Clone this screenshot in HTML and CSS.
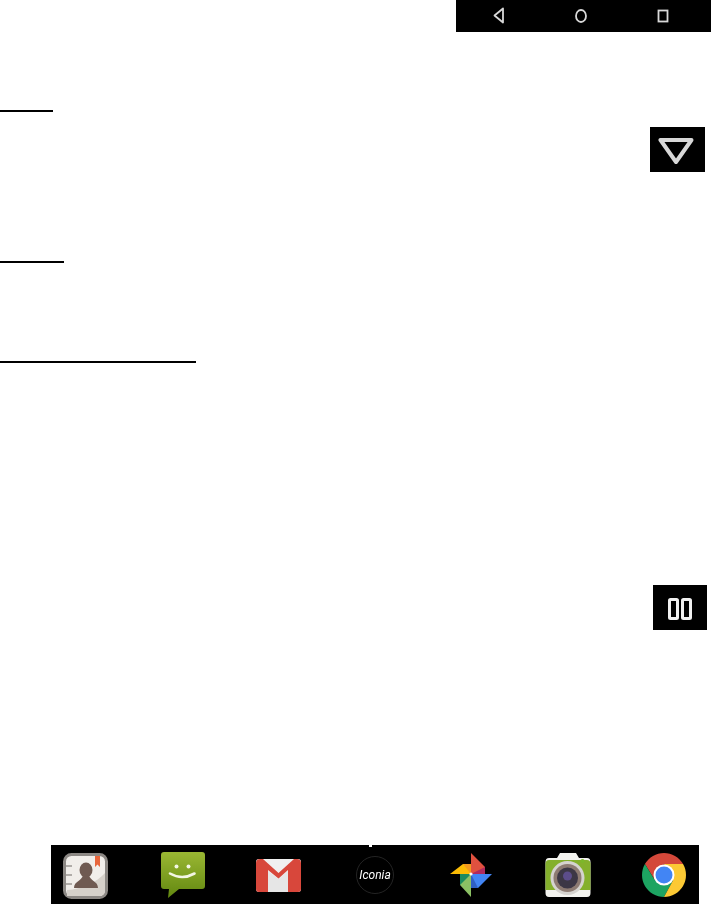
FILE: index.html
```html
<!DOCTYPE html>
<html lang="en">

<head>
    <meta charset="UTF-8">
    <title>Tablet manual page</title>
    <link rel="stylesheet" href="styles.css">
</head>

<body>
    <div class="page">
        <!-- Navigation bar -->
        <div class="navBar">
            <svg class="softIcon" width="255" height="32" viewBox="0 0 255 32">
                <path d="M47 8.5 L38.5 15.5 L47 22.5 Z" fill="none" stroke="#d8d8d8" stroke-width="1.8" stroke-linejoin="round"/>
                <ellipse cx="125" cy="16" rx="5" ry="6" fill="none" stroke="#d8d8d8" stroke-width="1.8"/>
                <rect x="202.5" y="10.5" width="9" height="11" fill="none" stroke="#d8d8d8" stroke-width="1.8"/>
            </svg>
        </div>

        <div class="rule ruleOne"></div>

        <div class="keyBox triangleBox">
            <svg class="softIcon" width="55" height="45" viewBox="0 0 55 45">
                <path d="M10.5 13 L41.5 13 L26 35 Z" fill="none" stroke="#d8d8d8" stroke-width="4" stroke-linejoin="round"/>
            </svg>
        </div>

        <div class="rule ruleTwo"></div>
        <div class="rule ruleThree"></div>

        <div class="keyBox pauseBox">
            <svg class="softIcon" width="54" height="45" viewBox="0 0 54 45">
                <rect x="16.5" y="14.5" width="8" height="19" rx="1" fill="none" stroke="#f0f0f0" stroke-width="3"/>
                <rect x="29.5" y="14.5" width="8" height="19" rx="1" fill="none" stroke="#f0f0f0" stroke-width="3"/>
            </svg>
        </div>

        <!-- App dock -->
        <div class="dock">
            <span class="dockNotch"></span>

            <svg class="appIcon" viewBox="0 0 46 46">
                <rect x="2.5" y="1.5" width="42" height="43" rx="7" fill="#f1eeea" stroke="#8c8884" stroke-width="3"/>
                <path d="M5 43 V37 C20 36 34 30 43 20 V37 Q43 43 37 43 Z" fill="#d6d1ca"/>
                <ellipse cx="24" cy="17" rx="6.5" ry="7.5" fill="#6f5a51"/>
                <path d="M12 35 C12 28 20 28 21 22 H27 C28 28 36 28 36 35 Z" fill="#6f5a51"/>
                <path d="M33 3 H38 V14 L35.5 11.5 L33 14 Z" fill="#e8663c"/>
                <path d="M4 13 H10 M4 22 H10 M4 31 H10" stroke="#9a9792" stroke-width="1.3"/>
            </svg>

            <svg class="appIcon" viewBox="0 0 46 46">
                <defs>
                    <linearGradient id="msgGreen" x1="0" y1="0" x2="0" y2="1">
                        <stop offset="0" stop-color="#9ab733"/>
                        <stop offset="1" stop-color="#628810"/>
                    </linearGradient>
                </defs>
                <path d="M5 -1 H43 Q46 -1 46 2 V33 Q46 36 43 36 H20 L9 45 L10 36 H5 Q2 36 2 33 V2 Q2 -1 5 -1 Z" fill="url(#msgGreen)"/>
                <circle cx="17.5" cy="13.5" r="2" fill="#f3f6e4"/>
                <circle cx="29.5" cy="13.5" r="2" fill="#f3f6e4"/>
                <path d="M11 20.5 Q23 27.5 35.5 20.5" fill="none" stroke="#f3f6e4" stroke-width="2.6" stroke-linecap="round"/>
            </svg>

            <svg class="appIcon" viewBox="0 0 46 46">
                <rect x="1" y="6" width="45" height="33" rx="3" fill="#f0f0f0"/>
                <path d="M13 39 V18 L23.5 26 L33 18 V39 Z" fill="#e6e6e6"/>
                <path d="M1 10 Q1 6 5 6 H8 L23.5 20 L39 6 H42 Q46 6 46 10 V36 Q46 39 43 39 H33 V17 L23.5 25.5 L13 17 V39 H4 Q1 39 1 36 Z" fill="#d8473b"/>
            </svg>

            <svg class="appIcon" viewBox="0 0 46 46">
                <circle cx="23" cy="22" r="18.5" fill="#000" stroke="#242424" stroke-width="1"/>
                <text class="iconiaText" x="23" y="26" text-anchor="middle">Iconia</text>
            </svg>

            <svg class="appIcon" viewBox="0 0 46 46">
                <path d="M23 21 V0 L37 14 V21 Z" fill="#e0513f"/>
                <path d="M23 21 L37 14 V21 Z" fill="#b02a5e"/>
                <path d="M23 21 H44 L30 35 H23 Z" fill="#4285f4"/>
                <path d="M23 21 L30 35 H23 Z" fill="#2f5fc4"/>
                <path d="M23 21 V44 L12 32 V21 Z" fill="#8bc064"/>
                <path d="M23 21 L12 32 V21 Z" fill="#1b8a5f"/>
                <path d="M23 21 H2 L15 11 H23 Z" fill="#fbbc05"/>
                <path d="M23 21 L15 11 H23 Z" fill="#f29a1f"/>
                <circle cx="23" cy="21" r="1.6" fill="#fff"/>
            </svg>

            <svg class="appIcon" viewBox="0 0 46 46">
                <path d="M4 5 H12 L15 0 H31 L34 5 H42 Q45.5 5 45.5 9 V40 Q45.5 44 42 44 H4 Q0.5 44 0.5 40 V9 Q0.5 5 4 5 Z" fill="#f3f3ef"/>
                <path d="M0.5 11 Q0.5 7 4 7 H42 Q45.5 7 45.5 11 V37 H0.5 Z" fill="#84b02c"/>
                <circle cx="22.5" cy="25" r="17" fill="#d5d3cf"/>
                <circle cx="22.5" cy="25" r="14" fill="#8d7b72"/>
                <circle cx="22.5" cy="25" r="10.5" fill="#3c3745"/>
                <circle cx="22.5" cy="23" r="4.5" fill="#5c4d8a"/>
                <circle cx="37.5" cy="8" r="2" fill="#7cb82a"/>
            </svg>

            <svg class="appIcon" viewBox="0 0 46 46">
                <path d="M3.95 11 A22 22 0 0 1 42.05 11 H23 L13.9 27.25 Z" fill="#d4483a"/>
                <path d="M3.95 11 A22 22 0 0 0 23 44 L32.1 27.25 H13.9 Z" fill="#1da462"/>
                <path d="M42.05 11 A22 22 0 0 1 23 44 L32.1 27.25 L23 11 Z" fill="#fcc934"/>
                <circle cx="23" cy="22" r="10.5" fill="#fff"/>
                <circle cx="23" cy="22" r="8.5" fill="#4285f4"/>
            </svg>
        </div>
    </div>
</body>

</html>
```

FILE: styles.css
```css
body {
    margin: 0;
    background-color: #fff;
    font-family: "Roboto", sans-serif;
}

.page {
    width: 711px;
    height: 904px;
    display: flex;
    flex-direction: column;
    overflow: hidden;
}

svg {
    display: block;
    overflow: visible;
}

/* The key pictures are slightly soft in the scan */
.softIcon,
.appIcon {
    filter: blur(0.5px);
}

/* Top navigation strip */
.navBar {
    align-self: flex-end;
    width: 255px;
    height: 32px;
    background-color: #000;
}

/* Heading underlines */
.rule {
    height: 1.5px;
    background-color: #000;
}

.ruleOne {
    width: 53px;
    margin-top: 78px;
}

.ruleTwo {
    width: 64px;
    margin-top: 89px;
}

.ruleThree {
    width: 196px;
    margin-top: 98.5px;
}

/* Black key pictures */
.keyBox {
    align-self: flex-end;
    height: 45px;
    background-color: #000;
}

.triangleBox {
    width: 55px;
    margin-top: 15.5px;
    margin-right: 6px;
}

.pauseBox {
    width: 54px;
    margin-top: 222px;
    margin-right: 4px;
}

/* Bottom app dock */
.dock {
    position: relative;
    width: 648px;
    height: 59px;
    box-sizing: border-box;
    margin-top: 215px;
    margin-left: 51px;
    padding: 8px 0 0 11px;
    display: flex;
    gap: 50.5px;
    background-color: #000;
}

.dockNotch {
    position: absolute;
    top: 0;
    left: 318px;
    width: 3px;
    height: 2px;
    background-color: #fff;
}

.appIcon {
    width: 46px;
    height: 46px;
    flex: none;
}

.iconiaText {
    font-family: "Roboto", sans-serif;
    font-size: 12px;
    font-style: italic;
    fill: #fff;
}
```
